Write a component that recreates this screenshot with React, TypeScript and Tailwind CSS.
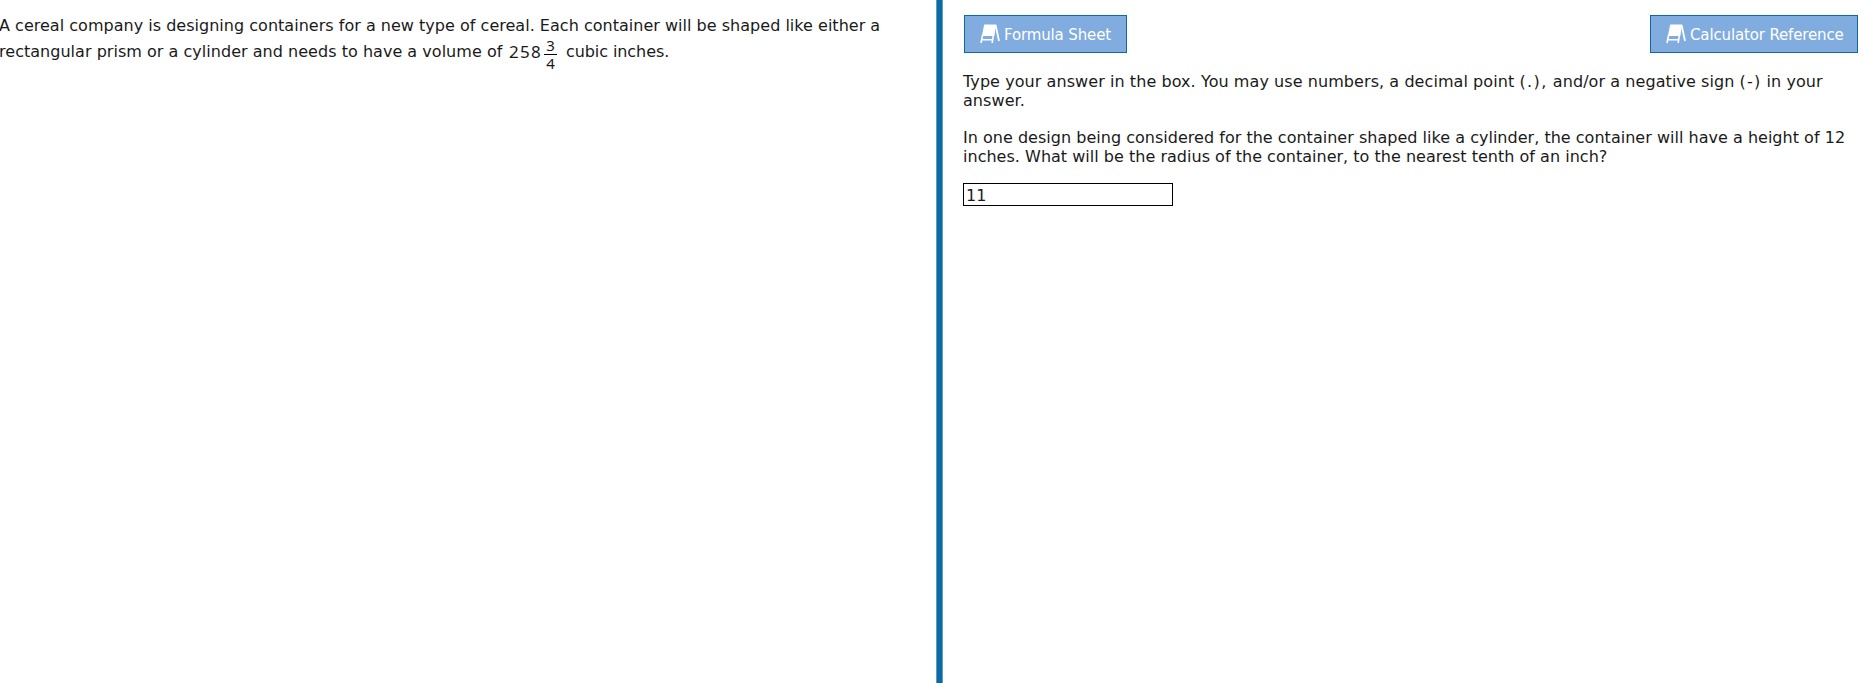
import { useState } from 'react';

interface ReferenceButtonProps {
  label: string;
  className: string;
}

function EaselIcon() {
  return (
    <svg className="h-[20px] w-[20px] shrink-0" viewBox="0 0 20 20" fill="none">
      <path d="M4.2 .5H16l-1.6 11.5H1.9z" fill="#fff" />
      <path d="M2.6 11L1 19M13.4 11l-1.2 8M2 15.8h10.5" stroke="#fff" strokeWidth="1.6" />
      <path d="M15.6 1L19 17" stroke="#fff" strokeWidth="1.8" />
    </svg>
  );
}

function ReferenceButton({ label, className }: ReferenceButtonProps) {
  return (
    <button
      className={`flex h-[38px] items-center border border-[#11699f] bg-[#81ace0] pl-[15px] text-white ${className}`}
    >
      <EaselIcon />
      <span className="ml-1 pt-[3px] text-[15px] tracking-[-0.14px] whitespace-nowrap">{label}</span>
    </button>
  );
}

export default function App() {
  const [answer, setAnswer] = useState('11');

  return (
    <div className="flex h-[683px] w-full overflow-hidden bg-white font-['DejaVu_Sans',sans-serif] text-[16px] text-[#1a1a1a]">
      {/* Passage */}
      <div className="-ml-px w-[937px] shrink-0 pt-[13px] whitespace-nowrap">
        <p className="h-[26px] leading-[26px] tracking-[0.02px]">
          A cereal company is designing containers for a new type of cereal. Each container will be shaped like either a
        </p>
        <div className="flex h-[26px] leading-[26px]">
          <span className="w-[510px] tracking-[0.03px]">rectangular prism or a cylinder and needs to have a volume of</span>
          <span className="w-[35px] font-['Noto_Sans'] text-[17px] tracking-[1.3px]">258</span>
          <span className="-mt-[2px] flex h-[34px] w-[13px] flex-col text-center font-['Noto_Sans'] text-[15px] leading-[16px]">
            <span className="h-[18px] border-b border-black">3</span>
            <span className="h-[16px]">4</span>
          </span>
          <span className="ml-[9px] tracking-[-0.08px]">cubic inches.</span>
        </div>
      </div>

      <div className="w-[7px] shrink-0 border-x border-[#5a9ac3] bg-[#0b69a3]" />

      {/* Question */}
      <div className="flex-1 pt-[15px] pr-[13px] pl-[20px]">
        <div className="flex justify-between pl-px">
          <ReferenceButton label="Formula Sheet" className="w-[163px]" />
          <ReferenceButton label="Calculator Reference" className="w-[208px]" />
        </div>

        <p className="mt-[19px] leading-[19px] tracking-[0.07px] whitespace-nowrap">
          Type your answer in the box. You may use numbers, a decimal point <span className="tracking-[1.4px]">(.),</span> and/or a negative sign <span className="tracking-[1.2px]">(-)</span> in your
          <br />
          answer.
        </p>
        <p className="mt-[18px] leading-[19px] tracking-[0.02px] whitespace-nowrap">
          In one design being considered for the container shaped like a cylinder, the container will have a height of 12
          <br />
          inches. What will be the radius of the container, to the nearest tenth of an inch?
        </p>

        <input
          type="text"
          value={answer}
          onChange={(e) => setAnswer(e.target.value)}
          className="mt-[17px] block h-[23px] w-[210px] border border-black px-[2px] pt-[3px] outline-none"
        />
      </div>
    </div>
  );
}
